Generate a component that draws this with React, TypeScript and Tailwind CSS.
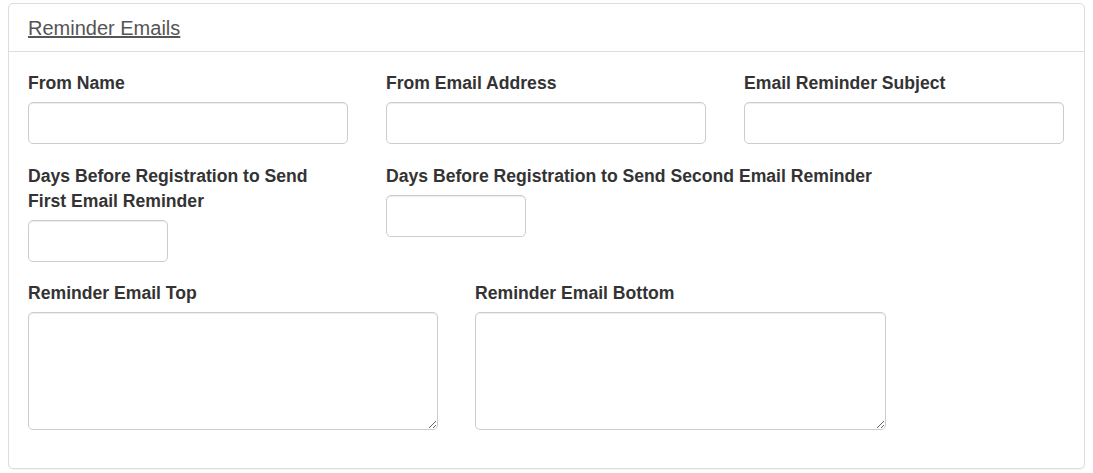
export default function App() {
  const inputCls =
    'block rounded-[5px] border border-[#ccc] bg-white px-[15px] text-[17.6px] text-[#555] shadow-[inset_0_1px_1px_rgba(0,0,0,0.075)] outline-none';
  const labelCls = 'mb-[6px] block text-[17.6px] font-bold leading-[25px] text-[#333]';

  return (
    <div className="min-h-screen bg-white px-2 pt-[3px] font-['Liberation_Sans',Arial,sans-serif]">
      <div className="rounded-[5px] border border-[#ddd] bg-white shadow-[0_1px_1px_rgba(0,0,0,0.05)]">
        {/* Header */}
        <div className="border-b border-[#ddd] px-[19px] py-[12.5px]">
          <h3 className="text-[20px] leading-[22px] text-[#555] underline">Reminder Emails</h3>
        </div>

        {/* Body */}
        <div className="px-[19px] pt-[19px] pb-[19px]">
          <div className="grid grid-cols-[320px_320px_320px] gap-x-[38px]">
            <div className="mb-[20px]">
              <label className={labelCls}>From Name</label>
              <input type="text" className={`${inputCls} h-[42px] w-full`} />
            </div>
            <div className="mb-[20px]">
              <label className={labelCls}>From Email Address</label>
              <input type="text" className={`${inputCls} h-[42px] w-full`} />
            </div>
            <div className="mb-[20px]">
              <label className={labelCls}>Email Reminder Subject</label>
              <input type="text" className={`${inputCls} h-[42px] w-full`} />
            </div>

            <div className="mb-[19px]">
              <label className={labelCls}>
                Days Before Registration to Send
                <br />
                First Email Reminder
              </label>
              <input type="text" className={`${inputCls} h-[42px] w-[140px]`} />
            </div>
            <div className="col-span-2 mb-[19px]">
              <label className={labelCls}>Days Before Registration to Send Second Email Reminder</label>
              <input type="text" className={`${inputCls} h-[42px] w-[140px]`} />
            </div>
          </div>

          <div className="flex gap-x-[37px]">
            <div className="mb-[19px] w-[410px]">
              <label className={labelCls}>Reminder Email Top</label>
              <textarea className={`${inputCls} h-[118px] w-full resize`} />
            </div>
            <div className="mb-[19px] w-[411px]">
              <label className={labelCls}>Reminder Email Bottom</label>
              <textarea className={`${inputCls} h-[118px] w-full resize`} />
            </div>
          </div>
        </div>
      </div>
    </div>
  );
}
